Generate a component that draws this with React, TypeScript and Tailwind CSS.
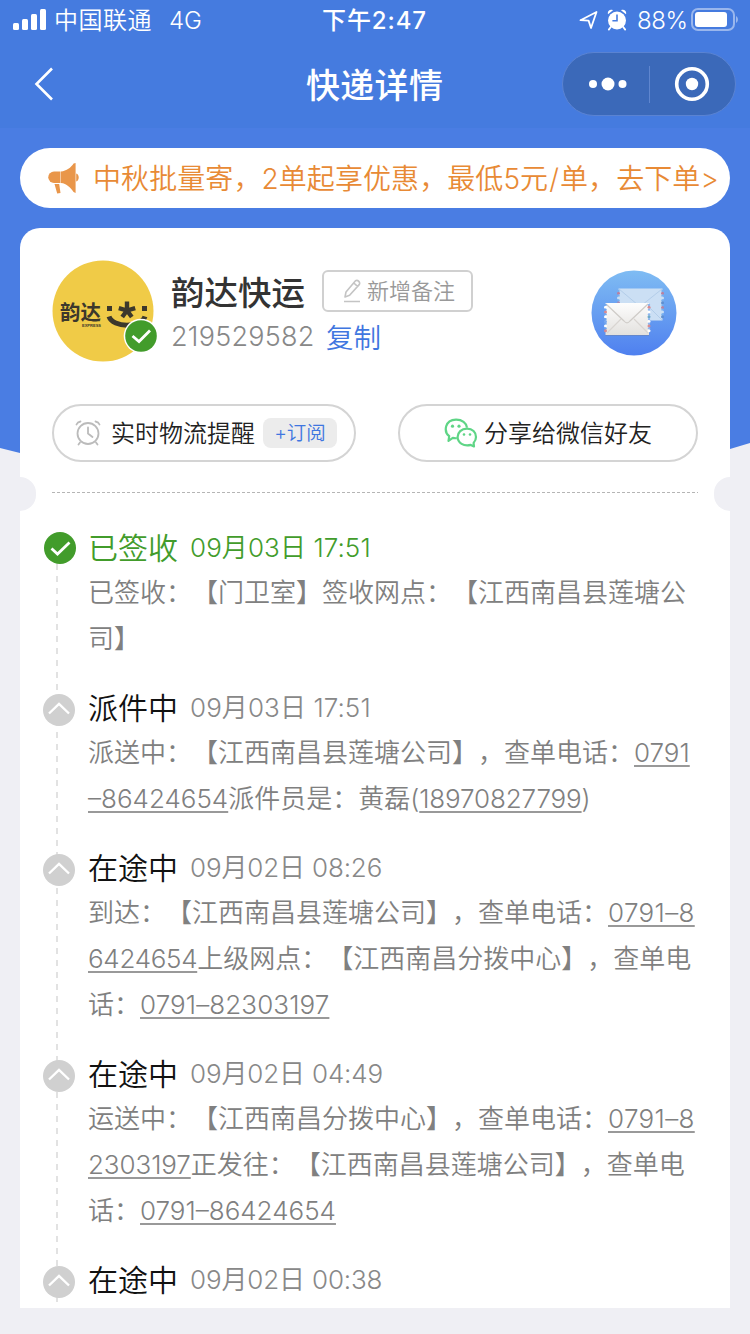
import type { ReactNode } from 'react';

const Tel = ({ children, fit }: { children: ReactNode; fit?: string }) => (
  <span className={`underline decoration-[#999] decoration-2 underline-offset-[3px] ${fit ?? ''}`}>{children}</span>
);

type Step = { title: string; time: string; lines: ReactNode[]; done?: boolean; timeFit?: string };

const steps: Step[] = [
  {
    title: '已签收',
    time: '09月03日 17:51',
    timeFit: 'tracking-[0.08px]',
    done: true,
    lines: ['已签收：【门卫室】签收网点：【江西南昌县莲塘公', '司】'],
  },
  {
    title: '派件中',
    time: '09月03日 17:51',
    timeFit: 'tracking-[0.08px]',
    lines: [
      <>派送中：【江西南昌县莲塘公司】，查单电话：<Tel>0791</Tel></>,
      <><Tel>–86424654</Tel>派件员是：黄磊(<Tel fit="tracking-[-0.15px]">18970827799</Tel>)</>,
    ],
  },
  {
    title: '在途中',
    time: '09月02日 08:26',
    lines: [
      <>到达：【江西南昌县莲塘公司】，查单电话：<Tel fit="tracking-[0.35px]">0791–8</Tel></>,
      <><Tel fit="tracking-[-0.3px]">6424654</Tel>上级网点：【江西南昌分拨中心】，查单电</>,
      <>话：<Tel fit="tracking-[0.1px]">0791–82303197</Tel></>,
    ],
  },
  {
    title: '在途中',
    time: '09月02日 04:49',
    lines: [
      <>运送中：【江西南昌分拨中心】，查单电话：<Tel fit="tracking-[0.35px]">0791–8</Tel></>,
      <><Tel fit="tracking-[-0.1px]">2303197</Tel>正发往：【江西南昌县莲塘公司】，查单电</>,
      <>话：<Tel>0791–86424654</Tel></>,
    ],
  },
  { title: '在途中', time: '09月02日 00:38', lines: [] },
];

function StatusBar() {
  return (
    <div className="flex h-10 items-center pl-[13px] pr-[10px] text-white">
      <svg className="h-[22px] w-[34px]" viewBox="0 0 34 22" fill="currentColor">
        <rect x="0" y="14" width="6" height="7" rx="1.5" />
        <rect x="9" y="10" width="6" height="11" rx="1.5" />
        <rect x="18" y="5" width="6" height="16" rx="1.5" />
        <rect x="27" y="0" width="6" height="21" rx="1.5" />
      </svg>
      <div className="ml-[7px] w-[115px] pt-[2px] text-[24px] font-[350] tracking-[0.5px]">中国联通</div>
      <div className="w-[153px] pt-[2px] text-[24px] font-[350]">4G</div>
      <div className="w-[257px] pt-[2px] text-[24px] font-medium tracking-[0.9px]">下午2:47</div>
      <svg className="h-[20px] w-[20px]" viewBox="0 0 20 20" fill="none" stroke="currentColor" strokeWidth="1.8" strokeLinejoin="round">
        <path d="M1.500 10.200 17.500 2 12 18 9.600 10.600Z" />
      </svg>
      <svg className="ml-[8px] h-[22px] w-[20px]" viewBox="0 0 20 22" fill="currentColor">
        <circle cx="10" cy="11.500" r="9" />
        <path d="M1 5.200C0 2 3-.2 6 1.200ZM19 5.200C20 2 17-.2 14 1.200Z" />
        <path d="m3.800 18-2 2.600M16.200 18l2 2.600" stroke="currentColor" strokeWidth="1.800" strokeLinecap="round" />
        <path d="M10 5.500v6.200H5.400" stroke="#457bdf" strokeWidth="1.600" fill="none" />
      </svg>
      <div className="ml-[10px] w-[54px] pt-[2px] text-[24px] font-[350] tracking-[-0.4px]">88%</div>
      <svg className="h-[24px] w-[48px]" viewBox="0 0 48 24" fill="none">
        <rect x="1" y="1" width="42" height="21" rx="6" stroke="#fff" strokeOpacity=".45" strokeWidth="2" />
        <rect x="4" y="4" width="32" height="15" rx="3" fill="#fff" />
        <path d="M45 8v7c2.600-1.500 2.600-5.500 0-7Z" fill="#fff" fillOpacity=".45" />
      </svg>
    </div>
  );
}

function NavBar() {
  return (
    <div className="flex h-[88px] items-center pl-[34px] pr-[14px] text-white">
      <svg className="h-[34px] w-[20px]" viewBox="0 0 20 34" fill="none" stroke="currentColor" strokeWidth="2.600">
        <path d="M18 1.500 2.500 17 18 32.500" />
      </svg>
      <h1 className="flex-1 pl-[252px] pt-[3px] text-[34px] font-medium leading-[44px] tracking-[0.3px]">快递详情</h1>
      <div className="flex h-[64px] w-[174px] items-center rounded-full border border-[#5a83d2] bg-[#3b69b9]">
        <svg className="ml-[26px] h-[14px] w-[38px]" viewBox="0 0 38 14" fill="currentColor">
          <circle cx="4" cy="7" r="4" />
          <circle cx="19" cy="7" r="6.500" />
          <circle cx="33.500" cy="7" r="4" />
        </svg>
        <div className="ml-[22px] h-[37px] w-px bg-[#5f86cf]" />
        <svg className="ml-[24px] h-[36px] w-[36px]" viewBox="0 0 36 36">
          <circle cx="18" cy="18" r="15.300" fill="none" stroke="currentColor" strokeWidth="3.600" />
          <circle cx="18" cy="18" r="6.200" fill="currentColor" />
        </svg>
      </div>
    </div>
  );
}

function Banner() {
  return (
    <div className="mx-5 mt-5 flex h-[60px] items-center rounded-full bg-white pl-[28px] text-[#e88a35]">
      <svg className="h-[32px] w-[32px]" viewBox="0 0 32 32" fill="#e9964a">
        <path d="M6 9.500h6.500v11.500H6A5.700 5.700 0 0 1 6 9.500Z" />
        <path d="M13 9.500C18.500 9 23 5.500 25.600 1.500L27.600 1v30L25.600 30C23 26 18.500 21.500 13 21Z" />
        <path d="M28.200 11.500c3.400.8 3.400 7.200 0 8ZM6.500 22h4.700l1.300 9-3.300.500Z" />
      </svg>
      <div className="ml-[13px] whitespace-nowrap pt-[2px] text-[28px] font-[350] leading-[40px] tracking-[0.080px] [text-spacing-trim:space-all]">
        中秋批量寄，2单起享优惠，最低5元<span className="mx-[1px]">/</span>单，去下单&gt;
      </div>
    </div>
  );
}

function CarrierLogo() {
  return (
    <svg className="h-[104px] w-[108px]" viewBox="0 0 108 104">
      <circle cx="51" cy="51" r="50.500" fill="#f0cb47" />
      <text x="8" y="60" fontSize="20.500" fontWeight="700" fill="#3c382c" fontFamily="Noto Sans CJK SC, sans-serif" textLength="41">韵达</text>
      <text x="30" y="67" fontSize="4" fontWeight="700" fill="#3c382c" fontFamily="Liberation Sans, sans-serif" textLength="19">EXPRESS</text>
      <path d="M55 46h5v5h-5zM90 46h5v5h-5z" fill="#3c382c" />
      <path d="M75 50.500V41.500M75 50.500l-8.200-2.300M75 50.500l8.200-2.300M75 50.500l-4.800 6.500M75 50.500l4.800 6.500" stroke="#3c382c" strokeWidth="4.400" fill="none" />
      <path d="M57 56.500C61 68 89 68 93 56.500" stroke="#3c382c" strokeWidth="5" fill="none" />
      <circle cx="89" cy="76" r="17.300" fill="#fff" />
      <circle cx="89" cy="76" r="15.800" fill="#429c2b" />
      <path d="m80.500 76 6.500 5.500L98 70.500" stroke="#fff" strokeWidth="2.800" fill="none" />
    </svg>
  );
}

function Marks({ x, top, count, colors, notch }: { x: number; top: number; count: number; colors: string[]; notch: string }) {
  return (
    <>
      {Array.from({ length: count }, (_, i) => (
        <g key={i}>
          <circle cx={x} cy={top + i * 4.7} r="1.2" fill={notch} />
          <circle cx={x} cy={top + 2.3 + i * 4.7} r="1.5" fill={colors[i % colors.length]} />
        </g>
      ))}
    </>
  );
}

function MailBadge() {
  return (
    <svg className="h-[86px] w-[86px]" viewBox="0 0 86 86">
      <defs>
        <linearGradient id="sky" x1="0" y1="0" x2="0" y2="1">
          <stop offset="0" stopColor="#7fbcf3" />
          <stop offset="1" stopColor="#4f80ef" />
        </linearGradient>
        <linearGradient id="paper" x1="0" y1="0" x2="0" y2="1">
          <stop offset="0" stopColor="#fdfdfd" />
          <stop offset="1" stopColor="#e3e1de" />
        </linearGradient>
      </defs>
      <circle cx="43" cy="43" r="42.500" fill="url(#sky)" />
      <rect x="27.500" y="18.500" width="44" height="32" fill="#cbdff4" />
      <path d="m28 19 19 16q2 2 4 0l20-16M71 50 55 34" stroke="#b3cde9" fill="none" />
      <Marks x={71.5} top={21} count={6} colors={['#b9809f', '#cbdff4', '#5f8fd0']} notch="#76b0f0" />
      <Marks x={27.500} top={21} count={3} colors={['#b9809f', '#cbdff4', '#a98bb8']} notch="#76b0f0" />
      <rect x="14.500" y="34" width="43.500" height="32" fill="#6b7fa8" opacity=".5" />
      <rect x="14.500" y="33" width="43.500" height="32" fill="url(#paper)" />
      <path d="m15 34 18 17c2 2.500 4 2.500 6 0l18-17" stroke="#cfccc8" strokeWidth="1.200" fill="none" />
      <path d="m16 63 14-14M57 63 43 49" stroke="#d8d5d1" strokeWidth="1.200" fill="none" />
      <Marks x={14.500} top={35} count={6} colors={['#ffffff', '#d98a90', '#ffffff', '#7aa9ef']} notch="#6ea5ef" />
      <Marks x={58} top={35} count={6} colors={['#d98a90', '#ffffff', '#6fa9c9', '#ffffff']} notch="#8db6ef" />
    </svg>
  );
}

function CarrierInfo() {
  return (
    <div className="flex h-[176px] pl-[32px] pt-[32px]">
      <CarrierLogo />
      <div className="ml-[11px] w-[420px]">
        <div className="flex h-[62px] items-center">
          <div className="w-[151px] pt-[3px] text-[33.500px] font-medium leading-[44px] text-[#333]">韵达快运</div>
          <div className="flex h-[42px] w-[151px] items-center rounded-[6px] border-2 border-[#d0d0d0] pl-[18px] text-[22px] font-[350] text-[#999]">
            <svg className="h-[24px] w-[20px]" viewBox="0 0 20 24" fill="none" stroke="#c4c4c4" strokeWidth="1.600" strokeLinejoin="round">
              <path d="m3 18 1-5L13.500 1.800q1.800-1 3.300.6t.4 3.200L7.600 16.300ZM11.800 4l4 3.700M2 22.500h16" />
            </svg>
            <span className="ml-[5px] pt-px">新增备注</span>
          </div>
        </div>
        <div className="-mt-px flex h-[32px] items-center leading-[32px]">
          <div className="w-[155px] text-[27px] font-[350] tracking-[0.250px] text-[#888]">219529582</div>
          <div className="pt-px text-[27.500px] font-[350] text-[#3f76e0]">复制</div>
        </div>
      </div>
      <div className="pt-[10px]">
        <MailBadge />
      </div>
    </div>
  );
}

function Actions() {
  return (
    <div className="flex justify-between px-[32px] text-[24px] font-[350] text-[#222]">
      <div className="flex h-[58px] w-[304px] items-center rounded-full border-2 border-[#d4d4d4] pl-[21px]">
        <svg className="h-[26px] w-[26px]" viewBox="0 0 26 26" fill="none" stroke="#bbb" strokeWidth="1.800" strokeLinecap="round">
          <circle cx="13" cy="13.500" r="10.500" />
          <path d="M13 7.500v6l4.500 3.500M1.500 4.500Q2.500 2 5.500 1.500M24.500 4.500Q23.500 2 20.500 1.500M5 22.500l-1.500 2M21 22.500l1.500 2" />
        </svg>
        <span className="ml-[10px] pt-[2px]">实时物流提醒</span>
        <span className="ml-[8px] flex h-[30px] w-[74px] items-center justify-center rounded-[8px] bg-[#ececec] pt-[2px] text-[19.500px] text-[#3f76e0]">+订阅</span>
      </div>
      <div className="flex h-[58px] w-[300px] items-center rounded-full border-2 border-[#d4d4d4] pl-[44px]">
        <svg className="h-[30px] w-[34px]" viewBox="0 0 34 30" fill="none" stroke="#5fd586" strokeWidth="2.200" strokeLinejoin="round">
          <path d="M12.800 20.200q-2 .2-4-.3L4.500 22.800l.7-4.600C-.5 13.500.6 2 12 1.600 18 1.500 22.500 5 23 9.600" />
          <path d="M23 10.600c5.500 0 9 3.600 9 8.300 0 2.500-1.200 4.600-2.400 6l.4 3.600-3.200-1.600c-7 1.800-13.200-2-13.200-7.800 0-4.700 3.800-8.500 9.400-8.500Z" />
          <g fill="#5fd586" stroke="none">
            <circle cx="8.500" cy="8.200" r="1.600" />
            <circle cx="15" cy="8.200" r="1.600" />
            <circle cx="20" cy="16.500" r="1.300" />
            <circle cx="26" cy="16.500" r="1.300" />
          </g>
        </svg>
        <span className="ml-[6px] pt-[2px]">分享给微信好友</span>
      </div>
    </div>
  );
}

function Divider() {
  return (
    <div className="flex h-[65px] items-center justify-between pb-[4px]">
      <div className="mt-[3px] h-[34px] w-[16px] rounded-r-full bg-[#efeff4]" />
      <div className="h-px w-[646px] bg-[repeating-linear-gradient(90deg,#b5b5b5_0_3px,transparent_3px_5px)]" />
      <div className="mt-[3px] h-[34px] w-[16px] rounded-l-full bg-[#efeff4]" />
    </div>
  );
}

function StepIcon({ done }: { done?: boolean }) {
  return (
    <svg className="h-[32px] w-[32px]" viewBox="0 0 32 32" fill="none" stroke="#fff">
      <circle cx="16" cy="16" r="16" stroke="none" fill={done ? '#429c2b' : '#d0d0d0'} />
      <path d={done ? 'm7.500 16.500 6 5.500 12-11.500' : 'M6 19.500 16 10l10 9.500'} strokeWidth={done ? 2.8 : 2.4} />
    </svg>
  );
}

function Timeline() {
  return (
    <div className="relative h-[781px] overflow-hidden pl-[24px]">
      <div className="absolute left-[36px] top-[37px] h-[738px] w-[2px] bg-[repeating-linear-gradient(180deg,#e2e2e2_0_6px,transparent_6px_12px)]" />
      {steps.map((s, i) => (
        <div key={i} className="relative pb-[26px]">
          <div className="flex h-[42px] items-center">
            <div className={s.done ? '' : '-ml-px mr-px pt-[3px]'}>
              <StepIcon done={s.done} />
            </div>
            <div className={`ml-[12px] w-[102px] text-[30px] font-[350] leading-[42px] ${s.done ? 'text-[#429c2b]' : 'text-[#111]'}`}>{s.title}</div>
            <div className={`text-[26px] font-[350] leading-[42px] ${s.timeFit ?? 'tracking-[-0.15px]'} ${s.done ? 'text-[#429c2b]' : 'text-[#888]'}`}>{s.time}</div>
          </div>
          <div className="-mb-px pl-[44px] pt-px text-[26px] font-[350] leading-[46px] text-[#808080]">
            {s.lines.map((line, j) => (
              <div key={j} className="h-[46px] whitespace-nowrap [text-spacing-trim:space-all]">{line}</div>
            ))}
          </div>
        </div>
      ))}
    </div>
  );
}

export default function App() {
  return (
    <div className="relative h-[1334px] w-[750px] overflow-hidden bg-[#efeff4] font-['Inter','Noto_Sans_CJK_SC',sans-serif]">
      <div className="absolute inset-x-0 top-0 h-[480px] bg-[#4a7de3] [clip-path:polygon(0_0,100%_0,100%_443px,730px_449px,375px_480px,20px_453px,0_448px)]" />
      <div className="relative">
        <header className="bg-[#457bdf]">
          <StatusBar />
          <NavBar />
        </header>
        <Banner />
        <main className="mx-5 mt-5 h-[1080px] rounded-t-[20px] bg-white">
          <CarrierInfo />
          <Actions />
          <Divider />
          <Timeline />
        </main>
      </div>
    </div>
  );
}
